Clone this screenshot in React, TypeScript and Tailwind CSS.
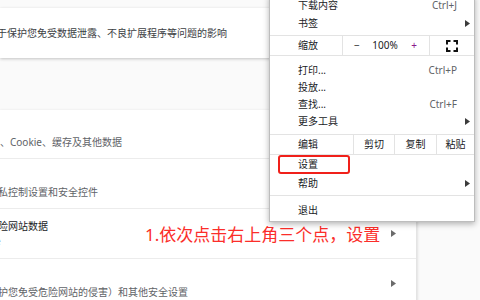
import React from 'react';

// 浏览器设置页 + 右上角菜单（带标注）

const font = { fontFamily: '"Noto Sans", "Noto Sans CJK SC", sans-serif' };

function Tri({ className = '' }: { className?: string }) {
  return (
    <svg width="5" height="7" viewBox="0 0 5 7" className={className}>
      <path d="M0 0 L5 3.5 L0 7 Z" fill="currentColor" />
    </svg>
  );
}

function MenuItem({ label, hint, arrow, h = 'h-[17px]' }: { label: string; hint?: string; arrow?: boolean; h?: string }) {
  return (
    <div className={`flex items-center ${h} pl-[28px] pr-[4px]`}>
      <span className="flex-1 text-[10px] text-[#202124]">{label}</span>
      {hint && <span className="text-[10px] text-[#5f6368] mr-[13px]">{hint}</span>}
      {arrow && <Tri className="text-[#3c3c3c]" />}
    </div>
  );
}

function Row({ children, arrow, h }: { children: React.ReactNode; arrow?: boolean; h: string }) {
  return (
    <div className={`relative flex items-center ${h} border-b border-[#ececec]`}>
      <div className="flex-1">{children}</div>
      {arrow && <Tri className="text-[#6b6b6b] mr-[20px]" />}
    </div>
  );
}

export default function App() {
  return (
    <div className="relative w-[480px] h-[300px] overflow-hidden bg-[#fafafa]" style={font}>
      <div className="w-[417px]">
        {/* 卡片 1 */}
        <div className="mt-[8px] h-[50px] bg-white shadow-[0_1px_3px_rgba(0,0,0,0.22)] flex items-center">
          <span className="ml-[-3px] text-[10px] text-[#3c4043] whitespace-nowrap">于保护您免受数据泄露、不良扩展程序等问题的影响</span>
        </div>

        {/* 卡片 2 */}
        <div className="mt-[52px] bg-white shadow-[0_1px_3px_rgba(0,0,0,0.18)] border-r border-[#e4e4e4]">
          <Row h="h-[49px]">
            <div className="pt-[16px] text-[10px] text-[#5f6368] whitespace-nowrap">、Cookie、缓存及其他数据</div>
          </Row>
          <Row h="h-[50px]">
            <div className="pt-[17px] ml-[-2px] text-[10px] text-[#5f6368] whitespace-nowrap">私控制设置和安全控件</div>
          </Row>
          <Row h="h-[50px]" arrow>
            <div className="flex flex-col ml-[-2px] text-[10px] leading-[15px] whitespace-nowrap">
              <span className="text-[#202124]">险网站数据</span>
              <span className="text-[#5f6368] ml-[-3px]">e</span>
            </div>
            <span className="absolute left-[145px] top-[14px] text-[17px] leading-[24px] text-[#fb2e2a] whitespace-nowrap">
              1.依次点击右上角三个点，设置
            </span>
          </Row>
          <Row h="h-[50px]" arrow>
            <div className="pt-[17px] ml-[-2px] text-[10px] text-[#5f6368] whitespace-nowrap">护您免受危险网站的侵害）和其他安全设置</div>
          </Row>
        </div>
      </div>

      {/* 菜单 */}
      <div className="absolute left-[269px] top-[-5px] w-[206px] bg-white border border-[#bdbdbd] shadow-[0_2px_6px_rgba(0,0,0,0.3)]">
        <MenuItem label="下载内容" hint="Ctrl+J" h="h-[18px]" />
        <MenuItem label="书签" arrow h="h-[18px]" />
        <div className="h-[3px]" />
        <div className="flex h-[21px] border-y border-[#e3e3e3] text-[10px] text-[#202124]">
          <div className="w-[73px] flex items-center pl-[28px] border-r border-[#e3e3e3]">缩放</div>
          <div className="w-[87px] flex items-center border-r border-[#e3e3e3]">
            <span className="w-[28px] text-center">−</span>
            <span className="w-[29px] text-center">100%</span>
            <span className="w-[30px] text-center text-[#8b1a8b]">+</span>
          </div>
          <div className="flex-1 flex items-center justify-center">
            <svg width="12" height="12" viewBox="0 0 12 12" fill="none" stroke="#111" strokeWidth="2">
              <path d="M1 4.5V1H4.5M7.5 1H11V4.5M11 7.5V11H7.5M4.5 11H1V7.5" />
            </svg>
          </div>
        </div>
        <div className="h-[6px]" />
        <MenuItem label="打印..." hint="Ctrl+P" />
        <MenuItem label="投放..." />
        <MenuItem label="查找..." hint="Ctrl+F" />
        <MenuItem label="更多工具" arrow />
        <div className="h-[4px]" />
        <div className="flex h-[21px] border-y border-[#e3e3e3] text-[10px] text-[#202124]">
          <div className="w-[84px] flex items-center pl-[28px] border-r border-[#e3e3e3]">编辑</div>
          <div className="w-[41px] flex items-center justify-center border-r border-[#e3e3e3]">剪切</div>
          <div className="w-[42px] flex items-center justify-center border-r border-[#e3e3e3]">复制</div>
          <div className="flex-1 flex items-center justify-center">粘贴</div>
        </div>
        <div className="relative">
          <MenuItem label="设置" h="h-[19px]" />
          <div className="absolute left-[8px] top-[0px] w-[72px] h-[19px] border-2 border-[#f0201a] rounded-[3px]" />
        </div>
        <MenuItem label="帮助" arrow h="h-[19px]" />
        <div className="h-[3px] border-b border-[#e3e3e3]" />
        <div className="h-[5px]" />
        <MenuItem label="退出" h="h-[18px]" />
        <div className="h-[2px]" />
      </div>
    </div>
  );
}
